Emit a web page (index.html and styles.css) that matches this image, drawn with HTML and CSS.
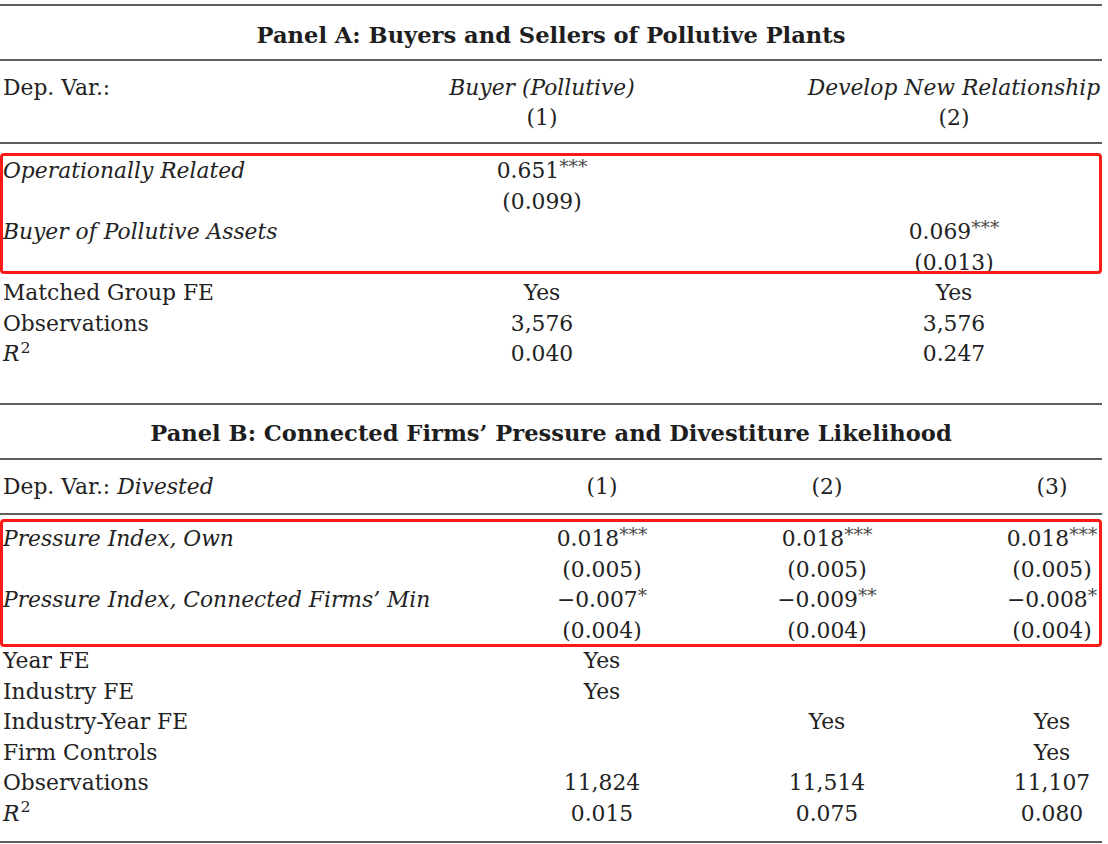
FILE: index.html
```html
<!DOCTYPE html>
<html lang="en">
<head>
<meta charset="utf-8">
<title>Regression table</title>
<link rel="stylesheet" href="styles.css">
</head>
<body>
<div class="table">
  <div class="rule"></div>
  <div class="panel-title">Panel A: Buyers and Sellers of Pollutive Plants</div>
  <div class="rule"></div>

  <div class="block head-a">
    <div class="row cols-a">
      <div class="label">Dep. Var.:</div>
      <div class="cell"><i>Buyer (Pollutive)</i></div>
      <div class="cell"><i>Develop New Relationship</i></div>
    </div>
    <div class="row cols-a">
      <div class="label"></div>
      <div class="cell">(1)</div>
      <div class="cell">(2)</div>
    </div>
  </div>
  <div class="rule"></div>

  <div class="block body-a">
    <div class="highlight hl-a">
      <div class="row cols-a">
        <div class="label"><i>Operationally Related</i></div>
        <div class="cell">0.651<sup>***</sup></div>
        <div class="cell"></div>
      </div>
      <div class="row cols-a">
        <div class="label"></div>
        <div class="cell">(0.099)</div>
        <div class="cell"></div>
      </div>
      <div class="row cols-a">
        <div class="label"><i>Buyer of Pollutive Assets</i></div>
        <div class="cell"></div>
        <div class="cell">0.069<sup>***</sup></div>
      </div>
      <div class="row cols-a">
        <div class="label"></div>
        <div class="cell"></div>
        <div class="cell">(0.013)</div>
      </div>
    </div>
    <div class="row cols-a">
      <div class="label">Matched Group FE</div>
      <div class="cell">Yes</div>
      <div class="cell">Yes</div>
    </div>
    <div class="row cols-a">
      <div class="label">Observations</div>
      <div class="cell">3,576</div>
      <div class="cell">3,576</div>
    </div>
    <div class="row cols-a">
      <div class="label"><i>R</i><sup class="sq">2</sup></div>
      <div class="cell">0.040</div>
      <div class="cell">0.247</div>
    </div>
  </div>
  <div class="rule"></div>

  <div class="panel-title">Panel B: Connected Firms’ Pressure and Divestiture Likelihood</div>
  <div class="rule"></div>

  <div class="block head-b">
    <div class="row cols-b">
      <div class="label">Dep. Var.: <i>Divested</i></div>
      <div class="cell">(1)</div>
      <div class="cell">(2)</div>
      <div class="cell">(3)</div>
    </div>
  </div>
  <div class="rule"></div>

  <div class="block body-b">
    <div class="highlight hl-b">
      <div class="row cols-b">
        <div class="label"><i>Pressure Index, Own</i></div>
        <div class="cell">0.018<sup>***</sup></div>
        <div class="cell">0.018<sup>***</sup></div>
        <div class="cell">0.018<sup>***</sup></div>
      </div>
      <div class="row cols-b">
        <div class="label"></div>
        <div class="cell">(0.005)</div>
        <div class="cell">(0.005)</div>
        <div class="cell">(0.005)</div>
      </div>
      <div class="row cols-b">
        <div class="label"><i>Pressure Index, Connected Firms’ Min</i></div>
        <div class="cell">−0.007<sup>*</sup></div>
        <div class="cell">−0.009<sup>**</sup></div>
        <div class="cell">−0.008<sup>*</sup></div>
      </div>
      <div class="row cols-b">
        <div class="label"></div>
        <div class="cell">(0.004)</div>
        <div class="cell">(0.004)</div>
        <div class="cell">(0.004)</div>
      </div>
    </div>
    <div class="row cols-b">
      <div class="label">Year FE</div>
      <div class="cell">Yes</div>
      <div class="cell"></div>
      <div class="cell"></div>
    </div>
    <div class="row cols-b">
      <div class="label">Industry FE</div>
      <div class="cell">Yes</div>
      <div class="cell"></div>
      <div class="cell"></div>
    </div>
    <div class="row cols-b">
      <div class="label">Industry-Year FE</div>
      <div class="cell"></div>
      <div class="cell">Yes</div>
      <div class="cell">Yes</div>
    </div>
    <div class="row cols-b">
      <div class="label">Firm Controls</div>
      <div class="cell"></div>
      <div class="cell"></div>
      <div class="cell">Yes</div>
    </div>
    <div class="row cols-b">
      <div class="label">Observations</div>
      <div class="cell">11,824</div>
      <div class="cell">11,514</div>
      <div class="cell">11,107</div>
    </div>
    <div class="row cols-b">
      <div class="label"><i>R</i><sup class="sq">2</sup></div>
      <div class="cell">0.015</div>
      <div class="cell">0.075</div>
      <div class="cell">0.080</div>
    </div>
  </div>
  <div class="rule"></div>
</div>
</body>
</html>
```

FILE: styles.css
```css
html, body {
  margin: 0;
  padding: 0;
  background: #ffffff;
}

body {
  font-family: "DejaVu Serif", "Liberation Serif", serif;
  font-size: 21.8px;
  color: #222222;
  overflow: hidden;
}

.table {
  width: 1102px;
  padding-top: 4px;
}

.rule {
  height: 2px;
  background: #5e5e5e;
}

.panel-title {
  font-weight: bold;
  text-align: center;
  line-height: 30.5px;
  padding: 13.75px 0 8.75px;
  font-size: 22.6px;
  color: #1e1e1e;
}

.row {
  display: grid;
  line-height: 30.5px;
  height: 30.5px;
  white-space: nowrap;
}

.cols-a {
  grid-template-columns: minmax(0, 1fr) 294px 296px;
  column-gap: 117px;
}

.cols-b {
  grid-template-columns: minmax(0, 1fr) 100px 100px 100px;
  column-gap: 125px;
}

.label {
  text-align: left;
  padding-left: 3px;
}

.cell {
  text-align: center;
}

.block.head-a {
  padding: 11.75px 0 8.25px;
}

.block.body-a {
  padding: 12.25px 0 32.75px;
}

.block.head-b {
  padding: 12.75px 0 9.75px;
}

.block.body-b {
  padding: 9.75px 0 11.25px;
}

sup {
  font-size: 0.86em;
  line-height: 0;
  vertical-align: 0.28em;
  color: #4a4a4a;
  font-weight: 300;
}

sup.sq {
  color: #222222;
  font-size: 0.72em;
  vertical-align: 0.55em;
  margin-left: 1px;
}

.highlight {
  position: relative;
}

.highlight::after {
  content: "";
  position: absolute;
  left: 0;
  right: 0;
  border: 3px solid #ff1a1a;
  border-radius: 4px;
  pointer-events: none;
}

.hl-a::after {
  top: -3px;
  bottom: 4px;
}

.hl-b::after {
  top: -5px;
  bottom: -1px;
}
```
